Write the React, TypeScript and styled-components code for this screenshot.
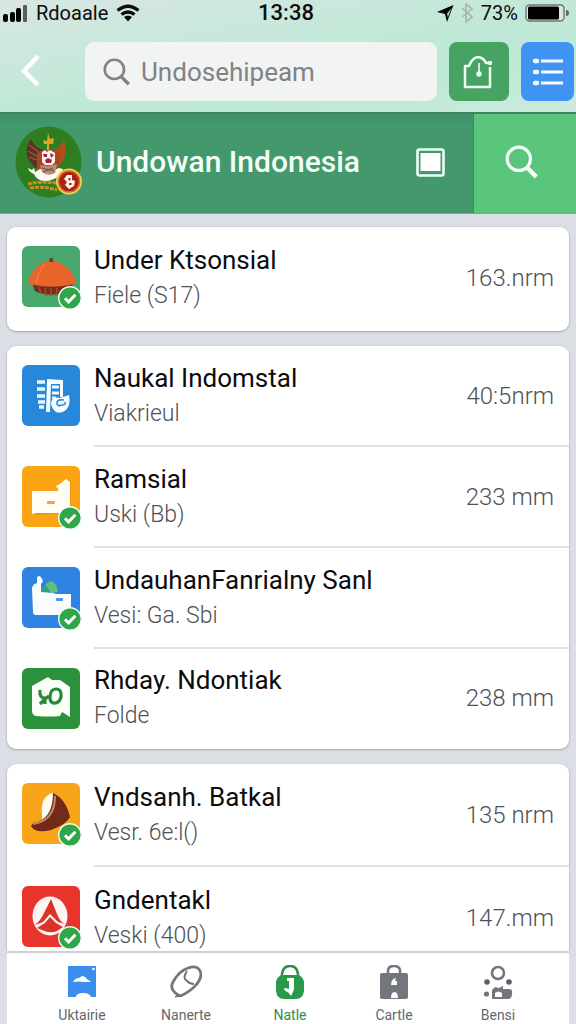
import React from "react";
import styled, { createGlobalStyle, css } from "styled-components";

const Global = createGlobalStyle`
  *, *::before, *::after { box-sizing: border-box; }
  body { margin: 0; font-family: Roboto, "Liberation Sans", sans-serif; color: #0c0c0e; background: #dcdee6; }
  button { font: inherit; border: 0; padding: 0; background: none; color: inherit; cursor: pointer; }
  svg { display: block; }
`;

const Page = styled.div`
  height: 100vh;
  display: flex;
  flex-direction: column;
  overflow: hidden;
`;

const Top = styled.header`
  flex: none;
  background: linear-gradient(170deg, #d9e6e2 0%, #c3e8d8 45%, #bce9d5 70%, #cdeadd 100%);
`;

const StatusBar = styled.div`
  height: 26px;
  padding: 0 7px 0 3px;
  display: grid;
  grid-template-columns: 1fr auto 1fr;
  align-items: center;
  font-size: 20px;
  line-height: 26px;
`;

const StatusGroup = styled.div<{ $end?: boolean }>`
  display: flex;
  align-items: center;
  gap: ${(p) => (p.$end ? 7 : 8)}px;
  ${(p) => p.$end && css`justify-content: flex-end;`}
`;

const Clock = styled.time`
  font-size: 22px;
  font-weight: 500;
`;

const SearchRow = styled.div`
  height: 86px;
  padding: 16px 2px 11px 16px;
  display: flex;
  align-items: flex-start;
  gap: 12px;
`;

const BackButton = styled.button`
  width: 57px;
  height: 58px;
  display: flex;
  align-items: center;
`;

const SearchBox = styled.label`
  flex: 1;
  min-width: 0;
  height: 59px;
  padding: 0 18px;
  display: flex;
  align-items: center;
  gap: 10px;
  border-radius: 9px;
  background: #f2f3f3;
  color: #808285;
`;

const SearchInput = styled.input`
  flex: 1;
  min-width: 0;
  border: 0;
  outline: 0;
  padding: 0;
  background: transparent;
  font: 400 26px/32px Roboto, "Liberation Sans", sans-serif;
  color: #808285;
  &::placeholder { color: #808285; opacity: 1; }
`;

const ActionButton = styled.button<{ $tone: string; $width: number }>`
  flex: none;
  width: ${(p) => p.$width}px;
  height: 59px;
  display: grid;
  place-items: center;
  border-radius: 8px;
  background: ${(p) => p.$tone};
`;

const Banner = styled.section`
  flex: none;
  height: 102px;
  display: flex;
  border-top: 2px solid #3d8460;
  border-bottom: 1px solid #7fa594;
  background: linear-gradient(#41916a, #44996c 12%);
  color: #f4fff8;
`;

const BannerMain = styled.div`
  flex: 1;
  min-width: 0;
  padding: 0 28px 3px 15px;
  display: flex;
  align-items: center;
  gap: 13px;
`;

const BannerTitle = styled.h1`
  flex: 1;
  margin: 0;
  font-size: 30px;
  line-height: 36px;
  font-weight: 500;
  white-space: nowrap;
`;

const BannerSearch = styled.button`
  flex: none;
  width: 103px;
  padding: 0 7px 3px 0;
  display: grid;
  place-items: center;
  border-left: 1px solid #3d8a5f;
  background: #5ac57d;
`;

const List = styled.main`
  flex: 1;
  min-height: 0;
  overflow: hidden;
  padding: 13px 7px 0;
  display: flex;
  flex-direction: column;
  gap: 15px;
`;

const Row = styled.li`
  height: 101px;
  padding-left: 15px;
  display: flex;
  gap: 14px;
  &:last-child { height: 100px; }
  &:only-child { height: 104px; }
`;

const Card = styled.ul<{ $roomy?: boolean }>`
  flex: none;
  margin: 0;
  padding: 0;
  list-style: none;
  border-radius: 9px;
  background: #fff;
  box-shadow: 0 1px 2px #a4a7b0, 0 0 2px #bdc0ca;
  ${(p) => p.$roomy && css`
    && ${Row} { height: 103px; }
  `}
`;

const Tile = styled.div`
  position: relative;
  flex: none;
  width: 58px;
  height: 61px;
  margin-top: 19px;
`;

const Badge = styled.svg`
  position: absolute;
  right: -2px;
  bottom: -3px;
`;

const RowBody = styled.div`
  flex: 1;
  min-width: 0;
  padding: 0 15px 2px 0;
  display: flex;
  align-items: center;
  justify-content: space-between;
  ${Row}:not(:last-child) & {
    padding-bottom: 0;
    border-bottom: 2px solid #e0e1e4;
  }
`;

const Name = styled.div`
  font-size: 26px;
  line-height: 36px;
  white-space: nowrap;
`;

const Detail = styled.div`
  font-size: 23px;
  line-height: 36px;
  font-weight: 300;
  color: #505155;
  white-space: nowrap;
`;

const Amount = styled.div`
  font-size: 24px;
  line-height: 36px;
  font-weight: 300;
  color: #505155;
  white-space: nowrap;
`;

const Tabs = styled.nav`
  flex: none;
  height: 73px;
  margin: 0 7px;
  padding: 0 19px 0 23px;
  display: grid;
  grid-template-columns: repeat(5, 1fr);
  border-top: 2px solid #cfd0d4;
  background: #fff;
`;

const Tab = styled.button<{ $active?: boolean }>`
  display: flex;
  flex-direction: column;
  align-items: center;
  justify-content: flex-start;
  gap: 6px;
  padding-top: 12px;
  font-size: 14px;
  line-height: 16px;
  color: ${(p) => (p.$active ? "#2c8f4c" : "#66676c")};
`;

const Check = () => (
  <Badge width="24" height="24" viewBox="0 0 24 24" aria-label="verified">
    <circle cx="12" cy="12" r="11.3" fill="#2fa649" stroke="#f1fff3" strokeWidth="1.4" />
    <path d="M7 12.3l3.6 3.5 6.8-7" fill="none" stroke="#fff" strokeWidth="3" />
  </Badge>
);

const art: Record<string, { bg: string; draw: React.ReactNode }> = {
  dome: {
    bg: "#47a76c",
    draw: (
      <>
        <path d="M10 37l3 8q15 7 31 1l8-9z" fill="#78291a" />
        <path d="M17 41l2 7M23 42l1 8M29 42v8M35 42l-1 8M41 42l-2 7" stroke="#a64a2a" strokeWidth="1.6" />
        <path d="M6 36Q10 22 22 16q7-3 14 0 14 6 18 19 0 4-13 5-15 2-29-1-6-1-6-3z" fill="#e9642a" />
        <path d="M23 17q-7 9-9 20" fill="none" stroke="#f38a4b" />
        <path d="M27.500 16v-4h3l1 4z" fill="#7c321b" />
      </>
    ),
  },
  records: {
    bg: "#2788da",
    draw: (
      <>
        <path d="M15 17h8M15 24h8M15 31h8M16 37h7M17 42h5" stroke="#e9f9ff" strokeWidth="3.600" />
        <path d="M25 14l16 1v17h-3V19h-9l-1 28h-4z" fill="#f5fcff" />
        <path d="M30 22h7M30 28h7M30 33h4" stroke="#e9f9ff" strokeWidth="3" />
        <path d="M29 37q3-6 9-4l9-3q2 10-3 15-5 4-10 2-5-4-5-10z" fill="#f5fcff" />
        <path d="M42 35q-7-1-7 3t5 2q4 0 3-3" fill="none" stroke="#2788da" strokeWidth="1.600" />
      </>
    ),
  },
  box: {
    bg: "#fba415",
    draw: (
      <>
        <path d="M11 49l4-2h28l6-7V15l-3-2v34z" fill="#c97a08" opacity=".35" />
        <path d="M10 25h26v-4l-2 1q0-3 4-4l6-5 4 3v29l-4 2H14l-4 1z" fill="#fffdf6" />
        <rect x="25" y="35" width="8" height="3" rx="1" fill="#f2a33a" />
      </>
    ),
  },
  desk: {
    bg: "#2f83e3",
    draw: (
      <>
        <path d="M23 22q0-7 6-8 6 2 7 11l-6 1z" fill="#5fbf7c" />
        <path d="M19 20q4-3 7 1l3 5H19z" fill="#2ca08b" />
        <path d="M10 21q1-4 5-5v-4q0-3 2-3t3 3l1 2-2 3v8l12 1 3 1h15v18q0 3-3 3H14q-3 0-3-3z" fill="#f9fdff" />
        <rect x="34" y="31" width="7" height="3" rx="1" fill="#4f94e8" />
      </>
    ),
  },
  house: {
    bg: "#2c913b",
    draw: (
      <>
        <path d="M10 18l16-9 4 3h8l10 7v30l-8-5-2 4q-10 1-24 0-4-1-4-5z" fill="#fafff8" />
        <path d="M18 22q-1 8 5 8v6m-5 0l5-5 4-3M28 30q0-9 6-9 6 0 5 8-2 7-8 6-3-1-3-5z" fill="none" stroke="#288a38" strokeWidth="3.200" />
      </>
    ),
  },
  bean: {
    bg: "#f9a519",
    draw: (
      <>
        <path d="M20 32q-2-18 10-22l6 5-5 18-11 6z" fill="#fffdf0" />
        <path d="M31 10q13 6 17 24-3 7-19 13-16 4-20-4l2-3q20-3 20-30z" fill="#712b18" />
        <path d="M11 41q22-3 22-28" fill="none" stroke="#c78763" strokeWidth="2" />
      </>
    ),
  },
  peak: {
    bg: "#e7352c",
    draw: (
      <>
        <ellipse cx="28" cy="30" rx="17.5" ry="19.500" fill="#fff6f2" />
        <path d="M29 13l6 15q3 8 8 10l-7-2-8-8-7 8-8 3q6-5 9-12z" fill="#dc3329" />
        <path d="M28 31l6 6 7 4-6 4q-7 3-15-1l-5-2 8-5z" fill="#dc3329" />
      </>
    ),
  },
};

type Item = { icon: string; name: string; detail: string; amount?: string; checked?: boolean };

const groups: { roomy?: boolean; items: Item[] }[] = [
  { items: [{ icon: "dome", name: "Under Ktsonsial", detail: "Fiele (S17)", amount: "163.nrm", checked: true }] },
  {
    items: [
      { icon: "records", name: "Naukal Indomstal", detail: "Viakrieul", amount: "40:5nrm" },
      { icon: "box", name: "Ramsial", detail: "Uski (Bb)", amount: "233 mm", checked: true },
      { icon: "desk", name: "UndauhanFanrialny Sanl", detail: "Vesi: Ga. Sbi", checked: true },
      { icon: "house", name: "Rhday. Ndontiak", detail: "Folde", amount: "238 mm" },
    ],
  },
  {
    roomy: true,
    items: [
      { icon: "bean", name: "Vndsanh. Batkal", detail: "Vesr. 6e:l()", amount: "135 nrm", checked: true },
      { icon: "peak", name: "Gndentakl", detail: "Veski (400)", amount: "147.mm", checked: true },
    ],
  },
];

const ItemRow = ({ item }: { item: Item }) => (
  <Row>
    <Tile>
      <svg width="58" height="61" viewBox="0 0 58 61" aria-hidden="true">
        <rect width="58" height="61" rx="6" fill={art[item.icon].bg} />
        {art[item.icon].draw}
      </svg>
      {item.checked && <Check />}
    </Tile>
    <RowBody>
      <div>
        <Name>{item.name}</Name>
        <Detail>{item.detail}</Detail>
      </div>
      {item.amount && <Amount>{item.amount}</Amount>}
    </RowBody>
  </Row>
);

const Signal = () => (
  <svg width="25" height="18" viewBox="0 0 25 18" aria-hidden="true">
    <rect x="0" y="10" width="5" height="8" rx="2" />
    <rect x="7" y="8" width="5" height="10" rx="2" />
    <rect x="13" y="4" width="5" height="14" rx="2" />
    <rect x="20" y="1" width="4" height="17" rx="1" fill="#55605c" />
  </svg>
);

const Wifi = () => (
  <svg width="24" height="18" viewBox="0 0 24 18" aria-hidden="true">
    <path d="M1.5 6.5Q12-2 22.500 6.500M5.500 10.500Q12 5.500 18.500 10.500" fill="none" stroke="#0c0c0e" strokeWidth="3.4" />
    <path d="M8 13q4-3 8 0l-4 4.500z" />
  </svg>
);

const Location = () => (
  <svg width="17" height="18" viewBox="0 0 17 18" aria-hidden="true">
    <path d="M16.500 1L0 8l8 2 2 8z" />
    <path d="M14.500 4L10 9.500l.8 4z" fill="#b8cdc4" />
  </svg>
);

const Bluetooth = () => (
  <svg width="13" height="20" viewBox="0 0 13 20" aria-hidden="true">
    <path d="M1 5l10 9-6 5V1l6 5-10 8" fill="none" stroke="#a3b3ad" strokeWidth="1.6" />
  </svg>
);

const Battery = () => (
  <svg width="44" height="18" viewBox="0 0 44 18" aria-hidden="true">
    <rect x="1" y="1" width="38" height="16" rx="3.500" fill="#dce8e3" stroke="#6d7572" strokeWidth="1.400" />
    <rect x="3" y="2.500" width="31" height="13" rx="1.500" />
    <path d="M41 6q3 0 3 3t-3 3z" fill="#5d6562" />
  </svg>
);

const Glass = ({ size, weight }: { size: number; weight: number }) => (
  <svg width={size} height={size} viewBox="0 0 32 32" fill="none" stroke="currentColor" strokeWidth={weight} aria-hidden="true">
    <circle cx="13" cy="13" r="11" />
    <path d="M20.500 21l9 9" strokeWidth={weight + 1} />
  </svg>
);

const Emblem = () => (
  <svg width="68" height="72" viewBox="0 0 68 72" role="img" aria-label="National emblem">
    <ellipse cx="33.500" cy="36" rx="33" ry="35.500" fill="#2e7d20" />
    <path d="M16 13q-7 10-3 20l7 9 12-4-2-14q-10-1-14-11z" fill="#5f3026" />
    <path d="M14 19l10 7M13 25l10 6M14 31l10 4" stroke="#a96b46" />
    <path d="M49 14q4 12-1 21l-7 8-10-5 2-14q12 1 16-10z" fill="#b24e1c" />
    <path d="M22 27q11-7 23-1l-2 16-10 6-11-5z" fill="#a8461d" />
    <path d="M33 7l2 6 4-1-1 6h-9l-1-4 4 1z" fill="#e0a526" />
    <path d="M33 18v6" stroke="#e0a526" strokeWidth="2" />
    <path d="M27 26l3-2 2 2 3-2 5 3v9l-3 3h-7l-3-3z" fill="#fdf3ef" />
    <path d="M28 28h4v3h-3zM35 27l4 2-3 3zM30 34l3-2 4 2-1 3h-5z" fill="#a42235" />
    <path d="M13 42l4 2 2-2 1 4 5-3q10 4 19-1l4 1q-2 9-15 12-11 1-14-7-5-2-6-6z" fill="#fff9f4" />
    <path d="M25 39q9 2 17-1l-2 9q-7 4-13-1z" fill="#ba8d76" />
    <path d="M27 42l12 3M28 46l10-4" stroke="#73473d" />
    <path d="M13 58q12-3 29-1M15 62q14-2 27 2" fill="none" stroke="#c98f20" strokeWidth="3" strokeDasharray="4 1" />
    <circle cx="54" cy="55.500" r="13" fill="#f3cf52" />
    <circle cx="54" cy="55.500" r="10.500" fill="#a72418" stroke="#df6a20" strokeWidth="1.500" />
    <path d="M52 49h5v5l3 1-1 5-5 3-4-4 2-3-3-3z" fill="#fff6ee" />
    <path d="M53.500 52h2v2.500h-2zM54 57h2.500v2H54z" fill="#a72418" />
  </svg>
);

const tabs = [
  {
    label: "Uktairie",
    icon: (
      <>
        <path d="M2 1h28v31h-5q-1-4-8-4t-7 4H2z" fill="#3b8eee" />
        <path d="M7 17q2-4 6-4l3-2q3 0 5 3l4 3h-7q-5-1-11 0z" fill="#fff" />
        <circle cx="27.500" cy="4" r="1.300" fill="#fff" />
      </>
    ),
  },
  {
    label: "Nanerte",
    icon: (
      <g fill="none" stroke="#74767e" strokeWidth="2.800">
        <path d="M8 30Q-1 24 3 17 9 6 18 3q11-4 13 6 0 7-8 14-7 6-13 8" />
        <path d="M17 6q-5 7 0 10 3 3 7 3" strokeWidth="2" />
        <path d="M5 32l3-3 4 2z" fill="#74767e" strokeWidth="1" />
      </g>
    ),
  },
  {
    label: "Natle",
    active: true,
    icon: (
      <>
        <path d="M8 12V9q1-8 8-8t8 8v3" fill="none" stroke="#2a9148" strokeWidth="2.600" />
        <path d="M7 10h18q5 3 5 8v8q-1 8-8 8H10q-7 0-8-8v-8q0-5 5-8z" fill="#2a9a4a" />
        <path d="M13 13h7v10q0 2-1 4l-2 4-3-4q-4-1-4-4 2 0 5 1v-8h-2z" fill="#fff" />
      </>
    ),
  },
  {
    label: "Cartle",
    icon: (
      <>
        <path d="M10 9V6q0-5 6-5t6 5v3" fill="none" stroke="#74767e" strokeWidth="2.500" />
        <rect x="2" y="8" width="28" height="26" rx="2" fill="#74767e" />
        <path d="M18 13l-1 3h2v4h-6q0-6 5-7z" fill="#fff" />
        <path d="M13 33q0-6 3.500-6t3.500 6z" fill="#fff" />
      </>
    ),
  },
  {
    label: "Bensi",
    icon: (
      <>
        <circle cx="16" cy="8" r="6" fill="none" stroke="#74767e" strokeWidth="2.600" />
        <circle cx="5" cy="17" r="2.800" fill="#5d5f66" />
        <circle cx="27" cy="17" r="2.800" fill="#5d5f66" />
        <circle cx="4.500" cy="29" r="2.600" fill="#74767e" />
        <path d="M10 34V25l3-3 4 1 4-2v3h6q4 0 3 5 0 5-4 5z" fill="#74767e" />
        <path d="M13 32v-4q3-3 7 0v4z" fill="#fff" />
      </>
    ),
  },
];

export default function App() {
  return (
    <Page>
      <Global />
      <Top>
        <StatusBar>
          <StatusGroup>
            <Signal />
            <span>Rdoaale</span>
            <Wifi />
          </StatusGroup>
          <Clock>13:38</Clock>
          <StatusGroup $end>
            <Location />
            <Bluetooth />
            <span>73%</span>
            <Battery />
          </StatusGroup>
        </StatusBar>
        <SearchRow>
          <BackButton aria-label="Back">
            <svg width="30" height="34" viewBox="0 0 30 34" fill="none" stroke="#fff" strokeWidth="4.500" aria-hidden="true">
              <path d="M22 2L8 17l14 14" />
            </svg>
          </BackButton>
          <SearchBox>
            <Glass size={28} weight={3} />
            <SearchInput type="text" aria-label="Search" placeholder="Undosehipeam" />
          </SearchBox>
          <ActionButton $tone="#46a362" $width={60} aria-label="Share">
            <svg width="32" height="36" viewBox="0 0 32 36" fill="none" stroke="#effff4" strokeWidth="2.500" strokeLinejoin="round" aria-hidden="true">
              <path d="M27 13v20H2V12h4q3-8 9-9 6 1 8 6h6" />
              <path d="M16 9v12" strokeWidth="1.600" />
              <circle cx="16" cy="20" r="1.400" />
              <circle cx="27" cy="9" r="1" />
            </svg>
          </ActionButton>
          <ActionButton $tone="#3f94f3" $width={53} aria-label="List">
            <svg width="32" height="30" viewBox="0 0 32 30" fill="none" stroke="#f5fbff" strokeWidth="3.200" aria-hidden="true">
              <path d="M3 4h2M3 15h2M3 26h2" strokeWidth="4.500" strokeLinecap="round" />
              <path d="M9 4h22M9 15h22M9 26h22" />
            </svg>
          </ActionButton>
        </SearchRow>
      </Top>
      <Banner>
        <BannerMain>
          <Emblem />
          <BannerTitle>Undowan Indonesia</BannerTitle>
          <svg width="29" height="29" viewBox="0 0 29 29" aria-hidden="true">
            <rect x="1.500" y="1.500" width="26" height="26" rx="2" fill="none" stroke="#ecfff4" strokeWidth="2.600" />
            <rect x="4.500" y="5" width="20" height="18" fill="#fff" />
          </svg>
        </BannerMain>
        <BannerSearch aria-label="Search list">
          <Glass size={34} weight={3} />
        </BannerSearch>
      </Banner>
      <List>
        {groups.map((group) => (
          <Card key={group.items[0].name} $roomy={group.roomy}>
            {group.items.map((item) => (
              <ItemRow key={item.name} item={item} />
            ))}
          </Card>
        ))}
      </List>
      <Tabs aria-label="Main">
        {tabs.map((tab) => (
          <Tab key={tab.label} $active={tab.active}>
            <svg width="32" height="36" viewBox="0 0 32 36" aria-hidden="true">
              {tab.icon}
            </svg>
            {tab.label}
          </Tab>
        ))}
      </Tabs>
    </Page>
  );
}
